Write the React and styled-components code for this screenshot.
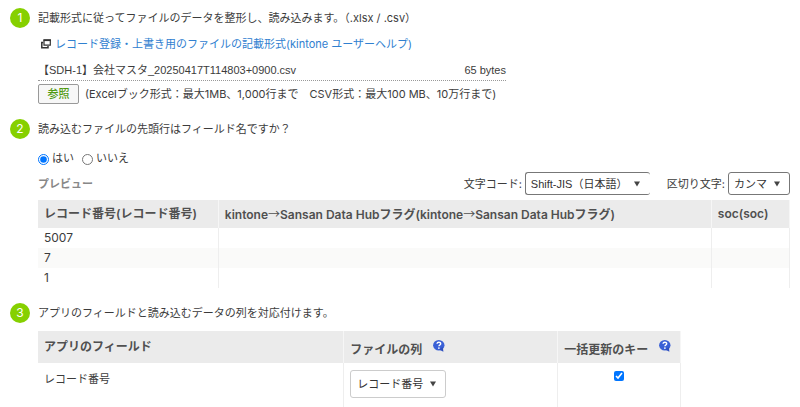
import React, { useState } from 'react';
import styled, { createGlobalStyle } from 'styled-components';

const GlobalStyle = createGlobalStyle`
  * {
    box-sizing: border-box;
  }
  body {
    margin: 0;
    background: #fff;
    color: #3c3c3c;
    font-family: Inter, "Noto Sans CJK JP", sans-serif;
    font-size: 11px;
    line-height: 20px;
  }
`;

const Page = styled.main`
  display: flex;
  flex-direction: column;
  gap: 15px;
  padding: 8px 10px 0;
`;

const StepRow = styled.section`
  display: grid;
  grid-template-columns: 20px minmax(0, 1fr);
  column-gap: 8px;
`;

const Badge = styled.span`
  width: 20px;
  height: 20px;
  border-radius: 50%;
  background: #86d000;
  color: #fff;
  font-size: 12px;
  text-align: center;
`;

const StepTitle = styled.h2`
  margin: 0;
  font-size: 11px;
  font-weight: 400;
  white-space: nowrap;
`;

const HelpLink = styled.a`
  display: flex;
  align-items: center;
  gap: 4px;
  margin: 6px 0 6px 3px;
  color: #3080d0;
  text-decoration: none;
  white-space: nowrap;
`;

const FileBox = styled.div`
  max-width: 468px;
`;

const FileLine = styled.div`
  display: flex;
  justify-content: space-between;
  border-bottom: 1px dotted #999;
  font-family: "Liberation Sans", "Noto Sans CJK JP", sans-serif;
`;

const BrowseLine = styled.div`
  display: flex;
  align-items: center;
  gap: 6px;
  padding-top: 3px;
  white-space: nowrap;
`;

const BrowseButton = styled.button`
  width: 41px;
  height: 20px;
  padding: 0;
  border: 1px solid #999;
  border-radius: 2px;
  background: #f7f7f7;
  color: #4f9a10;
  font: inherit;
  font-weight: 500;
  line-height: 18px;
`;

const RadioGroup = styled.div`
  display: flex;
  gap: 8px;
  padding-top: 9px;
`;

const RadioLabel = styled.label`
  display: flex;
  align-items: center;
  gap: 3px;
`;

const Radio = styled.input`
  width: 11px;
  height: 11px;
  margin: 2px 0 0;
`;

const Toolbar = styled.div`
  display: flex;
  align-items: center;
  gap: 17px;
  padding: 4px 0 5px;
`;

const PreviewTitle = styled.h3`
  flex: 1;
  margin: 0;
  color: #888;
  font-size: 11px;
  font-weight: 600;
`;

const Field = styled.label`
  display: flex;
  align-items: center;
  gap: 3px;
  white-space: nowrap;
`;

const SelectBox = styled.span`
  position: relative;
  display: inline-block;
  width: ${props => props.$width};

  svg {
    position: absolute;
    top: 50%;
    right: 10px;
    margin-top: -3px;
    pointer-events: none;
  }
`;

const Select = styled.select`
  display: block;
  appearance: none;
  width: 100%;
  height: ${props => (props.$soft ? '28px' : '23px')};
  padding: 0 18px 0 ${props => (props.$soft ? '6px' : '5px')};
  border: 1px solid ${props => (props.$soft ? '#ccc' : '#777')};
  ${props => props.$open && 'border-right: 0;'}
  border-radius: 3px;
  background: #fff;
  color: #333;
  font-family: "Liberation Sans", "Noto Sans CJK JP", sans-serif;
  font-size: 11px;
`;

const Table = styled.table`
  width: 100%;
  max-width: ${props => props.$max || 'none'};
  margin-top: ${props => (props.$max ? '8px' : '0')};
  border-collapse: collapse;
  table-layout: fixed;
`;

const Th = styled.th`
  width: ${props => props.$width || 'auto'};
  height: ${props => (props.$tall ? '32px' : '28px')};
  padding: 0 6px;
  border-right: 1px solid #f6f6f6;
  background: #ebebeb;
  color: #505050;
  font-size: 12px;
  font-weight: 600;
  text-align: left;
  white-space: nowrap;
`;

const Arrow = styled.span`
  font-family: "Noto Sans CJK JP", sans-serif;
  font-weight: 400;
`;

const Tr = styled.tr`
  background: ${props => (props.$striped ? '#fafaf9' : '#fff')};
`;

const Td = styled.td`
  height: 20px;
  padding: 0 6px;
  border-right: 1px solid #eee;
  font-size: ${props => (props.$mapping ? '11px' : '12px')};
  line-height: 19px;
  vertical-align: top;
  ${props => props.$mapping && 'height: 44px; padding-top: 7px;'}
`;

const HeadLabel = styled.span`
  display: flex;
  align-items: center;
  gap: 11px;
  padding-top: 5px;

  svg {
    margin-bottom: 8px;
  }
`;

const Checkbox = styled.input`
  display: block;
  width: 10px;
  height: 10px;
  margin: 1px auto 0;
`;

const previewColumns = [
  { label: 'レコード番号(レコード番号)', width: '24%' },
  { label: 'kintone→Sansan Data Hubフラグ(kintone→Sansan Data Hubフラグ)', width: '65.6%' },
  { label: 'soc(soc)' },
];

const previewRows = ['5007', '7', '1'];

const WindowIcon = () => (
  <svg width="10" height="10" viewBox="0 0 10 10" fill="none" stroke="#333" aria-hidden="true">
    <path d="M3 1.2H9.3V6.2H3Z" strokeWidth="1.2" />
    <path d="M2.5 1.2H9.9" strokeWidth="1.8" />
    <path d="M2.2 3.6H.8V8.8H7V7" strokeWidth="1.5" />
  </svg>
);

const HelpIcon = () => (
  <svg width="12" height="12" viewBox="0 0 12 12" role="img" aria-label="ヘルプ">
    <ellipse cx="5.8" cy="5.2" rx="5.7" ry="5.2" fill="#3a60d6" />
    <path d="M6 9.5L10.4 11.8L9.8 7Z" fill="#2f50c0" />
    <path d="M4 3.8C4.2 1.7 7.8 1.8 7.7 3.8C7.6 5 6 5 5.9 6.3" fill="none" stroke="#fff" strokeWidth="1.4" />
    <circle cx="5.9" cy="8.1" r=".85" fill="#fff" />
  </svg>
);

const ColumnLabel = ({ text }) => text.split('→').map((part, index) => (
  <React.Fragment key={index}>
    {index > 0 && <Arrow>→</Arrow>}
    {part}
  </React.Fragment>
));

const Dropdown = ({ id, options, width, soft, open, label }) => (
  <SelectBox $width={width}>
    <Select id={id} $soft={soft} $open={open} aria-label={label}>
      {options.map(option => <option key={option}>{option}</option>)}
    </Select>
    <svg width="6" height="6" viewBox="0 0 6 6" aria-hidden="true">
      <path d="M0 .5H6L3 5.5Z" fill="#444" />
    </svg>
  </SelectBox>
);

const Step = ({ number, title, children }) => (
  <StepRow>
    <Badge>{number}</Badge>
    <div>
      <StepTitle>{title}</StepTitle>
      {children}
    </div>
  </StepRow>
);

const App = () => {
  const [hasHeader, setHasHeader] = useState(true);
  const [isKey, setIsKey] = useState(true);

  return (
    <Page>
      <GlobalStyle />
      <Step number="1" title="記載形式に従ってファイルのデータを整形し、読み込みます。（.xlsx / .csv）">
        <HelpLink href="#format">
          <WindowIcon />
          レコード登録・上書き用のファイルの記載形式(kintone ユーザーヘルプ)
        </HelpLink>
        <FileBox>
          <FileLine>
            <span>【SDH-1】会社マスタ_20250417T114803+0900.csv</span>
            <span>65 bytes</span>
          </FileLine>
          <BrowseLine>
            <BrowseButton type="button">参照</BrowseButton>
            <span>(Excelブック形式：最大1MB、1,000行まで　CSV形式：最大100 MB、10万行まで)</span>
          </BrowseLine>
        </FileBox>
      </Step>

      <Step number="2" title="読み込むファイルの先頭行はフィールド名ですか？">
        <RadioGroup>
          <RadioLabel>
            <Radio type="radio" name="header" checked={hasHeader} onChange={() => setHasHeader(true)} />
            はい
          </RadioLabel>
          <RadioLabel>
            <Radio type="radio" name="header" checked={!hasHeader} onChange={() => setHasHeader(false)} />
            いいえ
          </RadioLabel>
        </RadioGroup>
        <Toolbar>
          <PreviewTitle>プレビュー</PreviewTitle>
          <Field htmlFor="charset">
            文字コード:
            <Dropdown id="charset" width="125px" open options={['Shift-JIS（日本語）']} />
          </Field>
          <Field htmlFor="separator">
            区切り文字:
            <Dropdown id="separator" width="62px" options={['カンマ']} />
          </Field>
        </Toolbar>
        <Table>
          <thead>
            <tr>
              {previewColumns.map(column => (
                <Th key={column.label} $width={column.width}>
                  <ColumnLabel text={column.label} />
                </Th>
              ))}
            </tr>
          </thead>
          <tbody>
            {previewRows.map((value, index) => (
              <Tr key={value} $striped={index % 2 === 1}>
                <Td>{value}</Td>
                <Td />
                <Td />
              </Tr>
            ))}
          </tbody>
        </Table>
      </Step>

      <Step number="3" title="アプリのフィールドと読み込むデータの列を対応付けます。">
        <Table $max="643px">
          <thead>
            <tr>
              <Th $tall $width="47.6%">アプリのフィールド</Th>
              <Th $tall $width="33.3%">
                <HeadLabel>ファイルの列<HelpIcon /></HeadLabel>
              </Th>
              <Th $tall>
                <HeadLabel>一括更新のキー<HelpIcon /></HeadLabel>
              </Th>
            </tr>
          </thead>
          <tbody>
            <Tr>
              <Td $mapping>レコード番号</Td>
              <Td $mapping>
                <Dropdown label="ファイルの列" width="96px" soft options={['レコード番号']} />
              </Td>
              <Td $mapping>
                <Checkbox
                  type="checkbox"
                  aria-label="一括更新のキー"
                  checked={isKey}
                  onChange={() => setIsKey(!isKey)}
                />
              </Td>
            </Tr>
          </tbody>
        </Table>
      </Step>
    </Page>
  );
};

export default App;
